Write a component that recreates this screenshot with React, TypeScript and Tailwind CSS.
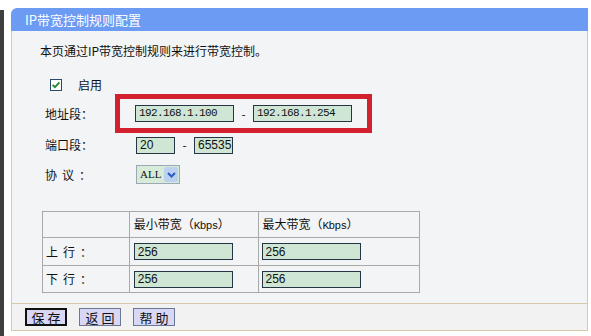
import React from "react";

const cjk = "font-['Noto_Sans_CJK_SC','Noto_Sans',sans-serif]";
const mono = "font-['Liberation_Mono','Noto_Sans_CJK_SC',monospace] tracking-[-0.6px]";
const sans = "font-['Liberation_Sans',Arial,sans-serif]";

const Field = ({ value, width, font = mono, size = "text-[11px]" }: { value: string; width: string; font?: string; size?: string }) => (
  <div
    className={`${width} h-[17px] bg-[#cfe6d5] border border-[#263546] flex items-center pl-[3px] ${font} ${size} text-[#111] leading-none`}
  >
    {value}
  </div>
);

const Check = () => (
  <svg width="12" height="12" viewBox="0 0 12 12">
    <rect x="0.5" y="0.5" width="11" height="11" fill="#fff" stroke="#2a4a6a" />
    <path d="M2.6 5.8 L4.9 8.2 L9.4 3.4" fill="none" stroke="#1f8a2a" strokeWidth="1.8" />
  </svg>
);

const Label = ({ text, width, spaced = false }: { text: string; width: string; spaced?: boolean }) => (
  <div className={`${width} text-[12px] text-[#111] whitespace-pre ${spaced ? "tracking-[5px]" : ""}`}>{text}</div>
);

export default function App() {
  return (
    <div className={`w-[591px] h-[336px] bg-white flex ${cjk}`}>
      {/* dark edge of the window behind */}
      <div className="w-[4px] mt-[10px] bg-[#3e3e3e]" />

      <div className="ml-[7px] mt-[8px] w-[577px] h-[323px] flex flex-col">
        <div className="h-[23px] bg-[#6b9bf3] rounded-tl-[6px] flex items-center pl-[14px] text-white text-[13px]">
          IP带宽控制规则配置
        </div>

        <div className="flex-1 bg-[#f3f4f5] border-x border-[#d8caa8] flex flex-col">
          <div className="mt-[10px] h-[20px] flex items-center ml-[28px] text-[12px] text-[#111]">
            本页通过IP带宽控制规则来进行带宽控制。
          </div>

          <div className="mt-[15px] h-[18px] flex items-center ml-[38px] gap-[16px]">
            <Check />
            <span className="text-[12px] text-[#111]">启用</span>
          </div>

          <div className="h-[39px] flex items-center ml-[33px]">
            <Label text="地址段：" width="w-[70px]" />
            <div className="w-[257px] h-[39px] border-[5px] border-[#d2202e] flex items-center pl-[15px]">
              <Field value="192.168.1.100" width="w-[99px]" />
              <span className="text-[12px] text-[#111] w-[19px] text-center">-</span>
              <Field value="192.168.1.254" width="w-[99px]" />
            </div>
          </div>

          <div className="mt-[2px] h-[20px] flex items-center ml-[33px]">
            <Label text="端口段：" width="w-[91px]" />
            <Field value="20" width="w-[39px]" font={sans} size="text-[12px]" />
            <span className="text-[12px] text-[#111] w-[19px] text-center">-</span>
            <Field value="65535" width="w-[39px]" font={sans} size="text-[12px]" />
          </div>

          <div className="mt-[9px] h-[21px] flex items-center ml-[33px]">
            <Label text="协议：" width="w-[91px]" spaced />
            <div className="w-[44px] h-[19px] border border-[#9aa8b8] bg-[#d6ecd9] flex items-center justify-between pl-[3px] pr-[1px]">
              <span className="font-['Liberation_Serif',serif] text-[11px] text-[#111] leading-none">ALL</span>
              <div className="w-[14px] h-[15px] bg-[#bcd0ef] rounded-[2px] flex items-center justify-center">
                <svg width="9" height="6" viewBox="0 0 9 6">
                  <path d="M1 1 L4.5 4.5 L8 1" fill="none" stroke="#2a5cc4" strokeWidth="2" />
                </svg>
              </div>
            </div>
          </div>

          <table className="mt-[26px] ml-[30px] w-[378px] border-collapse text-[12px] text-[#111]">
            <tbody>
              <tr className="h-[26px]">
                <td className="w-[87px] border border-[#a9a9a9]" />
                <td className="w-[129px] border border-[#a9a9a9] pl-[4px]">最小带宽（<span className={mono + " text-[11px]"}>Kbps</span>）</td>
                <td className="w-[162px] border border-[#a9a9a9] pl-[4px]">最大带宽（<span className={mono + " text-[11px]"}>Kbps</span>）</td>
              </tr>
              {["上行：", "下行："].map((t, i) => (
                <tr key={t} className={i === 0 ? "h-[28px]" : "h-[27px]"}>
                  <td className="border border-[#a9a9a9] pl-[3px] whitespace-pre tracking-[5px]">{t}</td>
                  <td className="border border-[#a9a9a9] pl-[4px]">
                    <Field value="256" width="w-[99px]" font={sans} size="text-[12px]" />
                  </td>
                  <td className="border border-[#a9a9a9] pl-[3px]">
                    <Field value="256" width="w-[99px]" font={sans} size="text-[12px]" />
                  </td>
                </tr>
              ))}
            </tbody>
          </table>
        </div>

        <div className="h-[28px] bg-[#f2f2f2] border border-[#d8caa8] flex items-center pl-[13px] gap-[12px]">
          <button className="w-[42px] h-[18px] border-2 border-[#111] bg-[#d8d8f6] text-[13px] text-[#111] leading-none whitespace-pre">保 存</button>
          <button className="w-[42px] h-[18px] border border-[#6a7896] bg-[#d8d8f6] text-[13px] text-[#111] leading-none whitespace-pre">返 回</button>
          <button className="w-[42px] h-[18px] border border-[#6a7896] bg-[#d8d8f6] text-[13px] text-[#111] leading-none whitespace-pre">帮 助</button>
        </div>
      </div>
    </div>
  );
}
